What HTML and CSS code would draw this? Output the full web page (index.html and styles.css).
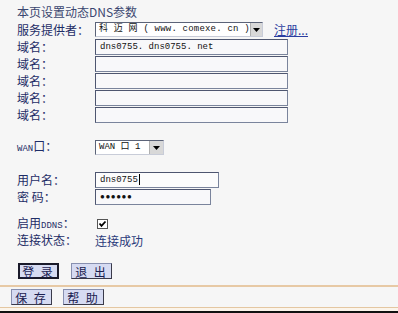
FILE: index.html
```html
<!DOCTYPE html>
<html>
<head>
<meta charset="utf-8">
<link rel="stylesheet" href="styles.css">
</head>
<body>
<div class="page">
  <div class="title">本页设置动态DNS参数</div>
  <div class="form">
    <div class="row">
      <span class="label">服务提供者：</span>
      <span class="field">
        <span class="select sel-wide"><span class="sel-text">科 迈 网 ( www. comexe. cn )</span><span class="arrow"><svg width="7" height="4" viewBox="0 0 7 4"><path d="M0 0H7L3.5 4Z" fill="#000"/></svg></span></span>
        <a class="link" href="#">注册...</a>
      </span>
    </div>
    <div class="row"><span class="label">域名：</span><span class="input in-long">dns0755. dns0755. net</span></div>
    <div class="row"><span class="label">域名：</span><span class="input in-long"></span></div>
    <div class="row"><span class="label">域名：</span><span class="input in-long"></span></div>
    <div class="row"><span class="label">域名：</span><span class="input in-long"></span></div>
    <div class="row"><span class="label">域名：</span><span class="input in-long"></span></div>

    <div class="row wan">
      <span class="label"><span class="small">WAN</span>口：</span>
      <span class="select sel-wan"><span class="sel-text">WAN 口 1</span><span class="arrow"><svg width="7" height="4" viewBox="0 0 7 4"><path d="M0 0H7L3.5 4Z" fill="#000"/></svg></span></span>
    </div>

    <div class="row user">
      <span class="label">用户名：</span><span class="input in-user">dns0755<span class="caret"></span></span>
    </div>
    <div class="row"><span class="label">密&nbsp;码：</span><span class="input in-pass">●●●●●●</span></div>

    <div class="row ddns">
      <span class="label">启用<span class="small">DDNS</span>：</span>
      <span class="check"><svg width="9" height="8" viewBox="0 0 9 8"><path d="M1.5 3.5L3.5 5.8L7.5 1.5" stroke="#000" stroke-width="1.8" fill="none"/></svg></span>
    </div>
    <div class="row status"><span class="label">连接状态：</span><span class="value">连接成功</span></div>

    <div class="btns">
      <button class="btn focus">登 录</button>
      <button class="btn">退 出</button>
    </div>
  </div>
  <div class="footer">
    <button class="btn">保 存</button>
    <button class="btn">帮 助</button>
  </div>
  <div class="bottom"></div>
</div>
</body>
</html>
```
FILE: styles.css
```css
* { box-sizing: border-box; }
html, body { margin: 0; padding: 0; }
body {
  background: #f6f6f6;
  font-family: "Noto Sans CJK SC", "Liberation Sans", sans-serif;
  font-size: 12px;
  color: #1e2d66;
  width: 398px;
  height: 313px;
  overflow: hidden;
}
.page { display: flex; flex-direction: column; height: 313px; }
.title {
  padding: 4px 0 0 17px;
  height: 24px;
  font-size: 12px;
  line-height: 16px;
  color: #3a4670;
}
.form { padding-left: 17px; display: flex; flex-direction: column; }
.row {
  display: flex;
  align-items: center;
  height: 17px;
}
.label { width: 78px; line-height: 14px; white-space: nowrap; }
.small { font-family: "Liberation Mono", monospace; font-size: 9px; }
.field { display: flex; align-items: center; }
.select {
  display: flex;
  align-items: center;
  height: 15px;
  border: 1px solid #5b6378;
  border-right-color: #c8ccd8;
  border-bottom-color: #c8ccd8;
  background: #fff;
  font-family: "Liberation Mono", "Noto Sans CJK SC", monospace;
  font-size: 9px;
  color: #111;
}
.sel-text { flex: 1; padding-left: 3px; white-space: nowrap; line-height: 13px; }
.sel-wide { width: 168px; }
.sel-wide .sel-text { letter-spacing: 0.2px; }
.sel-wan { width: 69px; }
.arrow {
  width: 14px;
  height: 13px;
  background: #d8d8d8;
  border-left: 1px solid #b0b0b0;
  display: flex;
  align-items: center;
  justify-content: center;
}
.link {
  margin-left: 11px;
  color: #2b3ea0;
  text-decoration: underline;
  font-size: 12px;
  line-height: 14px;
}
.input {
  display: flex;
  align-items: center;
  height: 16px;
  border: 1px solid #7a849c;
  border-top-color: #4e5670;
  border-left-color: #4e5670;
  background: #f8f8fa;
  font-family: "Liberation Mono", monospace;
  font-size: 9px;
  color: #111;
  padding-left: 4px;
}
.in-long { width: 193px; }
.in-user { width: 124px; background: #fcfcfc; }
.in-pass { width: 116px; font-size: 8px; letter-spacing: 0.6px; }
.caret { display: inline-block; width: 1px; height: 11px; background: #000; margin-left: 1px; }
.wan { margin-top: 16px; }
.user { margin-top: 15px; }
.ddns { margin-top: 11px; height: 16px; }
.check {
  margin-left: 2px;
  width: 11px;
  height: 10px;
  border: 1px solid #555;
  background: #fff;
  display: flex;
  align-items: center;
  justify-content: center;
}
.status { height: 16px; }
.value { color: #2a3a7a; }
.btns {
  display: flex;
  gap: 12px;
  margin-top: 15px;
  padding-left: 1px;
}
.btn {
  width: 41px;
  height: 16px;
  padding: 0;
  border: 1px solid #3a3a4a;
  border-top-color: #8890b0;
  border-left-color: #8890b0;
  background: #d6dbf2;
  font-family: "Noto Sans CJK SC", sans-serif;
  font-size: 12px;
  line-height: 13px;
  color: #1a2050;
  letter-spacing: 2px;
}
.btn.focus { border: 2px solid #1a1a2a; }
.footer {
  margin-top: 6px;
  border-top: 2px solid #e7c9a5;
  padding: 2px 0 0 11px;
  display: flex;
  gap: 11px;
  height: 22px;
  flex-shrink: 0;
}
.bottom {
  flex-shrink: 0;
  border-top: 1px solid #e4c7a2;
  border-bottom: 2px solid #111;
  height: 6px;
  background: #fbf4ea;
}
```
